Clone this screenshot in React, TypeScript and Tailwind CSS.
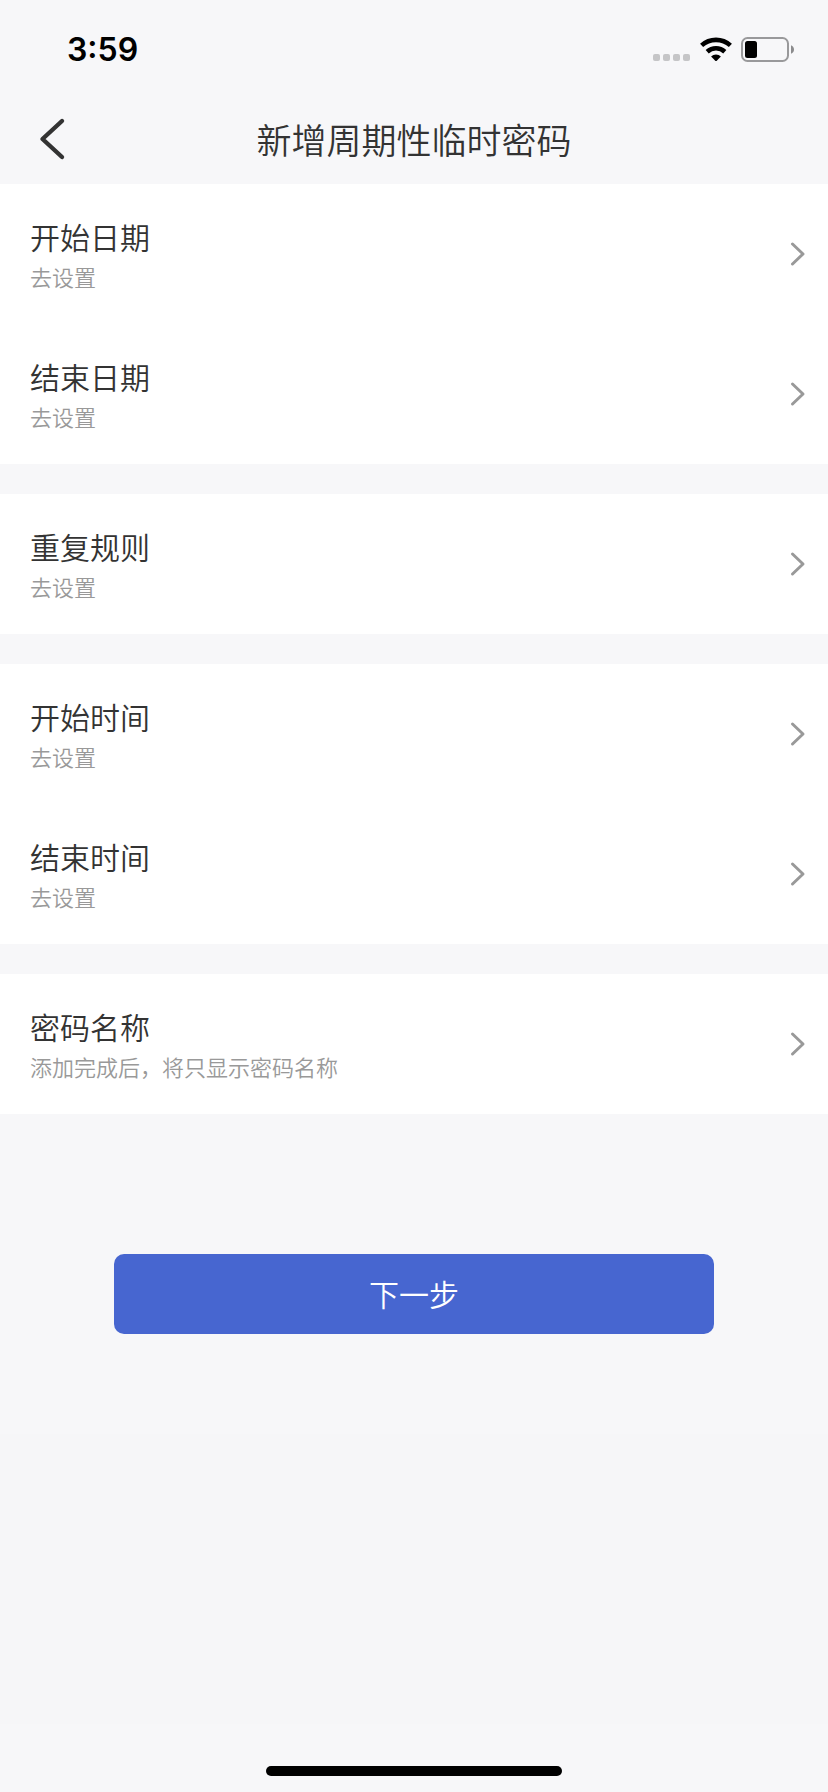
import React from "react";

type SettingItem = {
  title: string;
  desc: string;
};

const groups: SettingItem[][] = [
  [
    { title: "开始日期", desc: "去设置" },
    { title: "结束日期", desc: "去设置" },
  ],
  [{ title: "重复规则", desc: "去设置" }],
  [
    { title: "开始时间", desc: "去设置" },
    { title: "结束时间", desc: "去设置" },
  ],
  [{ title: "密码名称", desc: "添加完成后，将只显示密码名称" }],
];

const StatusBar: React.FC = () => (
  <div className="flex h-24 items-center justify-between pt-1 pr-[34px] pl-[67px] text-black">
    <span className="font-[Inter,sans-serif] text-[32px] leading-10 font-semibold">
      3:59
    </span>
    <div className="flex items-end pb-[2px]">
      <div className="mr-[10px] flex gap-[3px] pb-px">
        {[...Array(4)].map((_, index) => (
          <span key={index} className="size-[7px] rounded-[2px] bg-[#c5c5c7]" />
        ))}
      </div>
      <svg className="mr-[9px] h-[25px] w-8" viewBox="0 0 32 25" fill="none">
        <path
          d="M1.6 8.4A21.4 21.4 0 0 1 30.4 8.4M7.2 14.7A13 13 0 0 1 24.8 14.7"
          stroke="#000"
          strokeWidth="4.6"
        />
        <path
          d="M11.1 19.6A6.8 6.8 0 0 1 20.9 19.6L16.5 23.9Q16 24.3 15.5 23.9Z"
          fill="#000"
        />
      </svg>
      <svg className="h-[25px] w-[53px]" viewBox="0 0 53 25" fill="none">
        <rect x="1" y="1" width="46" height="23" rx="5.5" stroke="#99999b" strokeWidth="2" />
        <rect x="4" y="4" width="12" height="17" rx="2.5" fill="#000" />
        <path d="M50 8.2Q53 9.5 53 12.5T50 16.8Z" fill="#8b8b8d" />
      </svg>
    </div>
  </div>
);

const Header: React.FC = () => (
  <header className="grid h-22 grid-cols-[1fr_auto_1fr] items-center px-[30px] pb-[2px]">
    <button type="button" className="w-11 py-5 pl-[9px]" aria-label="返回">
      <svg className="h-11 w-7" viewBox="0 0 28 44" fill="none">
        <path
          d="M23 4L3.5 22L23 40"
          stroke="#333"
          strokeWidth="4.4"
          strokeLinecap="round"
          strokeLinejoin="round"
        />
      </svg>
    </button>
    <h1 className="text-[35px] leading-[48px] font-[350] text-[#333]">
      新增周期性临时密码
    </h1>
  </header>
);

const SettingRow: React.FC<{ item: SettingItem }> = ({ item }) => (
  <button
    type="button"
    className="flex h-[140px] w-full items-center justify-between pr-[21px] pl-[30px] text-left"
  >
    <span className="flex flex-col pt-[3px] font-[350]">
      <span className="text-[30px] leading-10 text-[#333]">{item.title}</span>
      <span className="text-[22px] leading-10 text-[#999]">{item.desc}</span>
    </span>
    <svg className="h-7 w-[18px]" viewBox="0 0 18 28" fill="none">
      <path
        d="M3.5 4L14 14L3.5 24"
        stroke="#999"
        strokeWidth="3"
        strokeLinecap="round"
        strokeLinejoin="round"
      />
    </svg>
  </button>
);

export default function App() {
  return (
    <div className="flex min-h-screen flex-col bg-[#f7f7f9] font-['Noto_Sans_CJK_SC',sans-serif]">
      <StatusBar />
      <Header />
      <main className="flex flex-1 flex-col">
        <div className="flex flex-col gap-[30px]">
          {groups.map((group) => (
            <section key={group[0].title} className="bg-white">
              {group.map((item) => (
                <SettingRow key={item.title} item={item} />
              ))}
            </section>
          ))}
        </div>
        <div className="px-[114px] pt-[140px] pb-[100px]">
          <button
            type="button"
            className="h-20 w-full rounded-[10px] bg-[#4766d0] pb-[2px] text-[30px] font-[350] text-white"
          >
            下一步
          </button>
        </div>
        <div className="flex-1 bg-[#f6f6f8]" />
      </main>
      <div className="flex h-[68px] items-end justify-center pb-4">
        <div className="h-[10px] w-[296px] rounded-full bg-black" />
      </div>
    </div>
  );
}
